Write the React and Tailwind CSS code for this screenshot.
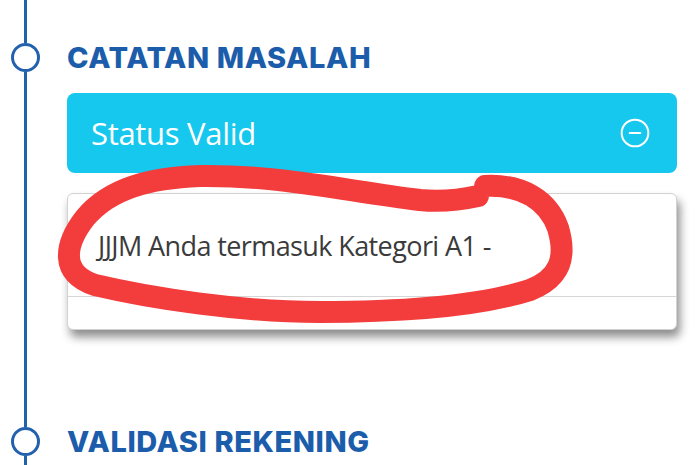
import { CircleMinus } from "lucide-react";

const heading = "font-['Inter',sans-serif] font-extrabold text-[#1c5dab] text-[29px] leading-none tracking-[0.6px]";

function Rail() {
  return (
    <div className="w-[50px] h-[465px] flex flex-col items-center shrink-0">
      <div className="h-[43px] w-[3px] bg-[#2361ad]" />
      <div className="h-[29px] w-[29px] rounded-full border-[3px] border-[#2361ad] bg-white" />
      <div className="flex-1 w-[3px] bg-[#2361ad]" />
      <div className="h-[29px] w-[29px] rounded-full border-[3px] border-[#2361ad] bg-white" />
      <div className="h-[9px] w-[3px] bg-[#2361ad]" />
    </div>
  );
}

export default function App() {
  return (
    <div className="relative w-[700px] h-[465px] bg-white overflow-hidden flex">
      <Rail />

      <div className="flex-1 flex flex-col pl-[17px] pr-[23px]">
        <div className="h-[29px] mt-[43px] flex items-center">
          <h1 className={heading}>CATATAN MASALAH</h1>
        </div>

        <div className="mt-[21px] h-[80px] rounded-[8px] bg-[#16c8ee] flex items-center justify-between pl-[24px] pr-[26px]">
          <span className="font-['Open_Sans',sans-serif] text-white text-[31px] leading-none tracking-[-0.3px]">
            Status Valid
          </span>
          <CircleMinus size={32} strokeWidth={1.5} className="text-white" />
        </div>

        <div className="mt-[20px] h-[137px] rounded-[6px] border border-[#d2d2d2] bg-white shadow-[3px_7px_10px_rgba(0,0,0,0.45)] flex flex-col">
          <div className="h-[103px] flex items-center pl-[30px] border-b border-[#d6d6d6]">
            <p className="font-['Open_Sans',sans-serif] text-[#3b3b3b] text-[27px] leading-none tracking-[-0.6px]">
              JJJM Anda termasuk Kategori A1 -
            </p>
          </div>
          <div className="flex-1" />
        </div>

        <div className="mt-[97px] h-[29px] flex items-center">
          <h2 className={heading}>VALIDASI REKENING</h2>
        </div>
      </div>

      <svg
        className="absolute inset-0 pointer-events-none"
        width="700"
        height="465"
        viewBox="0 0 700 465"
      >
        <path
          d="M 485 186 C 522 184, 548 200, 558 228 C 567 258, 560 278, 530 290 C 480 306, 400 312, 320 312 C 240 312, 150 298, 95 285 C 60 274, 64 245, 85 218 C 110 188, 150 178, 200 176 C 280 175, 340 190, 420 200 C 440 202, 460 200, 478 196"
          fill="none"
          stroke="#f33c3c"
          strokeWidth="22"
          strokeLinecap="round"
          strokeLinejoin="round"
        />
      </svg>
    </div>
  );
}
